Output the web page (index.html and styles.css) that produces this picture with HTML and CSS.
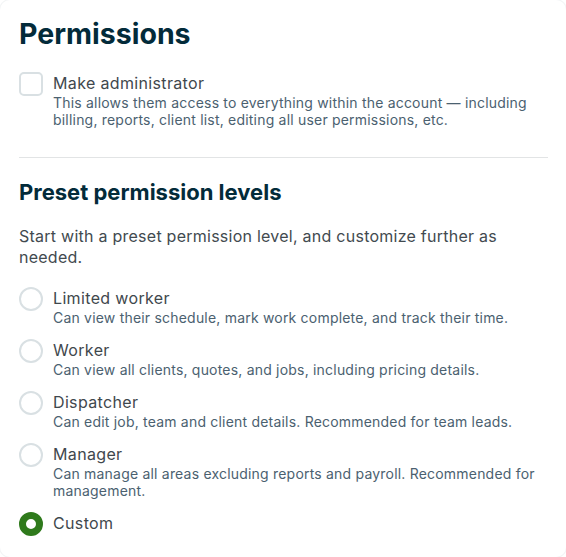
FILE: index.html
```html
<!DOCTYPE html>
<html>
<head>
<meta charset="utf-8">
<link rel="stylesheet" href="styles.css">
</head>
<body>
<div class="card">
  <h1 class="title">Permissions</h1>
  <label class="option">
    <span class="checkbox"></span>
    <span class="text">
      <span class="label">Make administrator</span>
      <span class="desc">This allows them access to everything within the account — including billing, reports, client list, editing all user permissions, etc.</span>
    </span>
  </label>
  <hr class="divider">
  <h2 class="subtitle">Preset permission levels</h2>
  <p class="intro">Start with a preset permission level, and customize further as needed.</p>
  <div class="radios">
    <label class="option">
      <span class="radio"></span>
      <span class="text">
        <span class="label">Limited worker</span>
        <span class="desc">Can view their schedule, mark work complete, and track their time.</span>
      </span>
    </label>
    <label class="option">
      <span class="radio"></span>
      <span class="text">
        <span class="label">Worker</span>
        <span class="desc">Can view all clients, quotes, and jobs, including pricing details.</span>
      </span>
    </label>
    <label class="option">
      <span class="radio"></span>
      <span class="text">
        <span class="label">Dispatcher</span>
        <span class="desc">Can edit job, team and client details. Recommended for team leads.</span>
      </span>
    </label>
    <label class="option">
      <span class="radio"></span>
      <span class="text">
        <span class="label">Manager</span>
        <span class="desc">Can manage all areas excluding reports and payroll. Recommended for management.</span>
      </span>
    </label>
    <label class="option">
      <span class="radio checked"></span>
      <span class="text">
        <span class="label">Custom</span>
      </span>
    </label>
  </div>
</div>
</body>
</html>
```
FILE: styles.css
```css
html, body {
  margin: 0;
  padding: 0;
  background: #ffffff;
}
body {
  font-family: Inter, "Noto Sans", sans-serif;
  color: #3f484d;
}
.card {
  width: 566px;
  min-height: 557px;
  box-sizing: border-box;
  padding: 16px 18px 0 19px;
  border-radius: 10px;
  box-shadow: 0 0 0 1px #f3f5f6;
}
.title {
  margin: 0;
  font-size: 28.5px;
  line-height: 36px;
  font-weight: 700;
  color: #032b3a;
}
.subtitle {
  margin: 0;
  font-size: 22px;
  line-height: 28px;
  font-weight: 700;
  color: #032b3a;
}
.option {
  display: flex;
  gap: 10px;
  align-items: flex-start;
}
.title + .option {
  margin-top: 20px;
}
.checkbox {
  flex: none;
  width: 24px;
  height: 24px;
  box-sizing: border-box;
  border: 2px solid #d9e0e3;
  border-radius: 5px;
}
.radio {
  flex: none;
  width: 24px;
  height: 24px;
  box-sizing: border-box;
  border: 2px solid #d9e0e3;
  border-radius: 50%;
}
.radio.checked {
  border: 7px solid #2f7a1c;
}
.text {
  display: flex;
  flex-direction: column;
}
.label {
  font-size: 16px;
  line-height: 22px;
  letter-spacing: 0.35px;
  color: #3f484d;
}
.desc {
  font-size: 14px;
  line-height: 17px;
  letter-spacing: 0.2px;
  color: #4b6170;
}
.divider {
  margin: 29px 0 20px 0;
  border: none;
  border-top: 1px solid #e2e4e5;
}
.intro {
  margin: 20px 0 19px 0;
  font-size: 16px;
  line-height: 21px;
  letter-spacing: 0.25px;
  color: #424a4f;
}
.radios {
  display: flex;
  flex-direction: column;
  gap: 13px;
}
```
